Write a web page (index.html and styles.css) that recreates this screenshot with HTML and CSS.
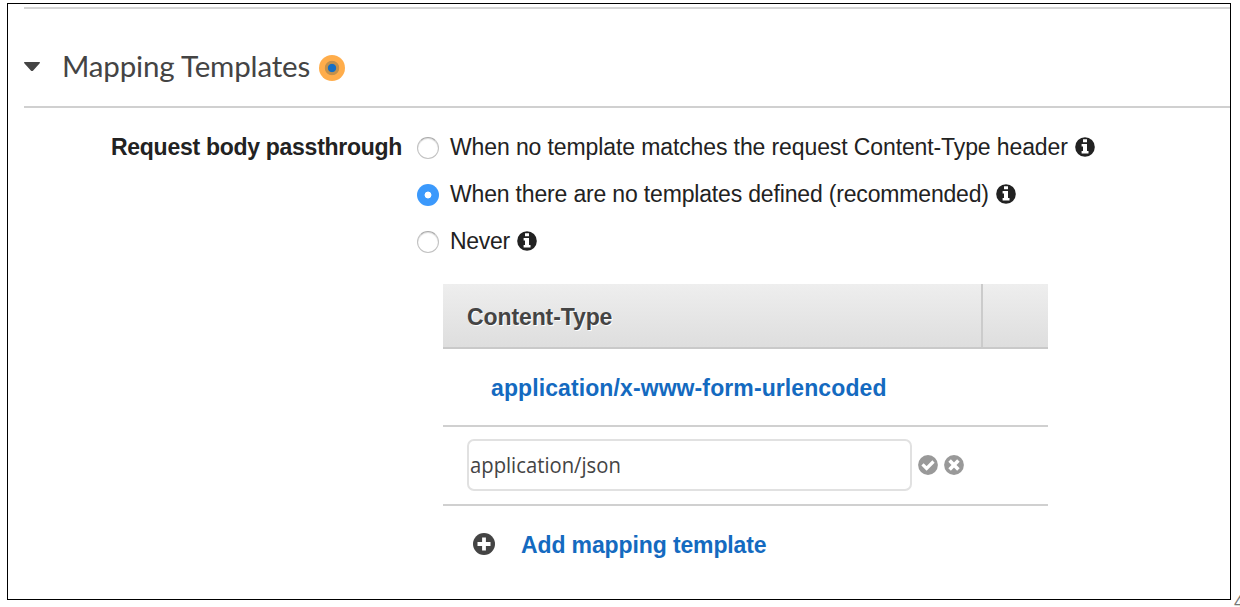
FILE: index.html
```html
<!DOCTYPE html>
<html lang="en">
<head>
<meta charset="utf-8">
<title>Mapping Templates</title>
<link rel="stylesheet" href="styles.css">
</head>
<body>
<svg class="symbols" aria-hidden="true">
  <symbol id="info" viewBox="0 0 20 20"><circle cx="10" cy="10" r="9.8" fill="currentColor"/><path fill="#fff" d="M8 2.3h4v3H8zM6.6 7H12v7h1.5v2.6H6.6V14H8V9.6H6.6z"/></symbol>
</svg>
<main class="panel">
  <header class="section-head">
    <svg class="caret" viewBox="0 0 16 10"><path fill="#444" d="M.6 0h14.8q1 .3.3 1.2L9.2 8.4Q8 9.8 6.8 8.4L.3 1.2Q-.4.3.6 0z"/></svg>
    <h1 class="title">Mapping Templates</h1>
    <span class="beacon"></span>
  </header>
  <section class="form">
    <div class="form-label">Request body passthrough</div>
    <div class="options">
      <label class="option"><span class="radio"></span><span class="option-text option-a">When no template matches the request Content-Type header</span><svg class="info"><use href="#info"/></svg></label>
      <label class="option"><span class="radio checked"></span><span class="option-text option-b">When there are no templates defined (recommended)</span><svg class="info"><use href="#info"/></svg></label>
      <label class="option"><span class="radio"></span><span class="option-text option-c">Never</span><svg class="info"><use href="#info"/></svg></label>
    </div>
  </section>
  <section class="table">
    <div class="table-head"><div class="head-name"><span class="head-text">Content-Type</span></div><div class="head-actions"></div></div>
    <div class="row row-link"><a class="link link-type">application/x-www-form-urlencoded</a></div>
    <div class="row row-edit">
      <div class="field"><span class="field-text">application/json</span></div>
      <svg class="action" viewBox="0 0 20 20"><circle cx="10" cy="10" r="9.9" fill="#999"/><path fill="none" stroke="#fff" stroke-width="3.2" d="M4.5 9.3 8.6 13.4 15.5 6.5"/></svg>
      <svg class="action" viewBox="0 0 20 20"><circle cx="10" cy="10" r="9.9" fill="#999"/><path fill="none" stroke="#fff" stroke-width="3.6" d="M5.6 5.6 14.4 14.4M14.4 5.6 5.6 14.4"/></svg>
    </div>
    <div class="row-add">
      <svg class="plus" viewBox="0 0 22 22"><circle cx="11" cy="11" r="11" fill="#444"/><path fill="none" stroke="#fff" stroke-width="3.8" d="M11 4.5v13M4.5 11h13"/></svg>
      <a class="link link-add">Add mapping template</a>
    </div>
  </section>
</main>
<span class="page-number">4</span>
</body>
</html>
```
FILE: styles.css
```css
* { box-sizing: border-box; }
body {
  margin: 0;
  height: 607px;
  padding: 3px 0 0 7px;
  overflow: hidden;
  position: relative;
  background: #fff;
  color: #222;
  font: 23px/28px "Liberation Sans", Arial, sans-serif;
  white-space: nowrap;
}
.symbols { position: absolute; width: 0; height: 0; }
.panel { width: 1224px; height: 597px; padding: 3px 0 0 16px; border: 1px solid #000; }
.section-head {
  display: flex;
  align-items: center;
  height: 101px;
  padding-top: 18px;
  border-top: 2px solid #d4d4d4;
  border-bottom: 2px solid #d0d0d0;
}
.caret { width: 16px; height: 10px; margin-right: 22px; }
.title {
  margin: 0;
  width: 248px;
  padding-bottom: 2px;
  font: 400 29.5px/36px Lato, sans-serif;
  letter-spacing: -0.15px;
  color: #444;
}
.beacon {
  width: 26px;
  height: 26px;
  margin: 2px 0 0 9px;
  border-radius: 50%;
  background: radial-gradient(circle, #146ec4 0 3.7px, #c3904b 4.6px 6.8px, #ffad4b 7.6px);
}
.form { display: flex; padding: 25px 0 0 87px; }
.form-label { width: 306px; font-weight: 700; letter-spacing: -0.28px; }
.options { display: grid; gap: 19px; }
.option { display: flex; align-items: center; height: 28px; }
.option-a { letter-spacing: -0.11px; }
.option-b { letter-spacing: -0.17px; }
.option-c { letter-spacing: -0.3px; }
.radio {
  width: 22px;
  height: 22px;
  margin: 2px 11px 0 0;
  border: 1px solid #c2c2c2;
  border-top-color: #aaa;
  border-radius: 50%;
  box-shadow: inset 0 1px 1px #ddd;
}
.radio.checked { border: 0; box-shadow: none; background: radial-gradient(circle, #fff 0 3px, #3b99fc 3.8px); }
.info { width: 20px; height: 20px; margin: 0 0 1px 7px; }
.table { width: 605px; margin: 29px 0 0 419px; }
.table-head {
  display: flex;
  height: 65px;
  border-bottom: 2px solid #c9c9c9;
  background: linear-gradient(#eee, #dedede);
}
.head-name {
  width: 540px;
  padding: 19px 24px 0;
  border-right: 2px solid #cbcbcb;
  color: #444;
  font-weight: 700;
  letter-spacing: -0.1px;
  text-shadow: 1px 1px #fff;
}
.row { display: flex; align-items: center; border-bottom: 2px solid #d0d0d0; }
.row-link { height: 78px; padding: 2px 0 0 48px; }
.row-edit { height: 79px; padding: 0 0 1px 24px; }
.link { color: #146ac0; font-weight: 700; }
.link-type { letter-spacing: 0.1px; }
.link-add { letter-spacing: -0.12px; }
.field {
  width: 445px;
  height: 52px;
  padding: 10px 1px;
  margin-right: 6px;
  border: 2px solid #e1e1e1;
  border-radius: 7px;
  color: #444;
  font: 22px/26px "Open Sans", sans-serif;
}
.field-text { display: inline-block; transform: scaleX(0.92); transform-origin: left; }
.action { width: 20px; height: 20px; margin-right: 6px; }
.row-add { display: flex; align-items: center; height: 78px; padding-left: 30px; }
.plus { width: 22px; height: 22px; margin: 0 26px 2px 0; }
.page-number { position: absolute; left: 1234px; top: 592px; color: #777; font-size: 18px; line-height: 20px; }
```
